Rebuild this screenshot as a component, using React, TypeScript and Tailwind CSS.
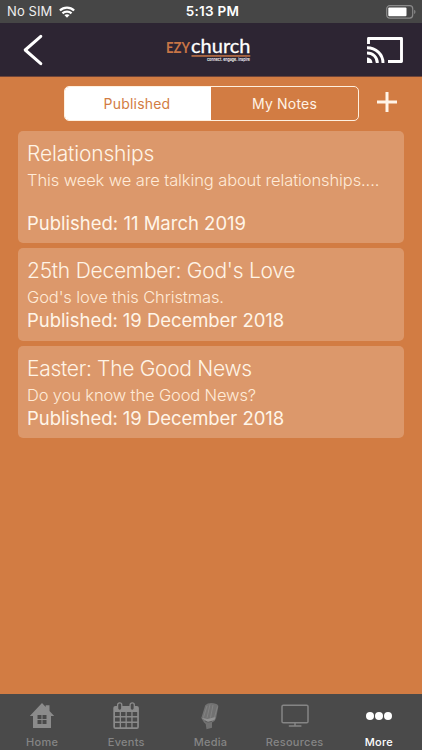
import React from "react";

type Note = {
  title: string;
  titleClass: string;
  text: string;
  textClass: string;
  date: string;
  dateClass: string;
};

const notes: Note[] = [
  {
    title: "Relationships",
    titleClass: "tracking-[-0.15px]",
    text: "This week we are talking about relationships....",
    textClass: "h-10 tracking-[-0.11px]",
    date: "Published: 11 March 2019",
    dateClass: "tracking-[0px]",
  },
  {
    title: "25th December: God's Love",
    titleClass: "tracking-[-0.25px]",
    text: "God's love this Christmas.",
    textClass: "h-5 tracking-[-0.11px]",
    date: "Published: 19 December 2018",
    dateClass: "tracking-[-0.05px]",
  },
  {
    title: "Easter: The Good News",
    titleClass: "tracking-[-0.3px]",
    text: "Do you know the Good News?",
    textClass: "h-5 tracking-[-0.14px]",
    date: "Published: 19 December 2018",
    dateClass: "tracking-[-0.05px]",
  },
];

function StatusBar() {
  return (
    <div className="grid h-[23px] shrink-0 grid-cols-3 items-center bg-[#464646] text-[13px] leading-[23px] text-white">
      <div className="flex items-center gap-[7px] pl-[7px]">
        <span className="tracking-[0.1px] text-[#eeeeee]">No SIM</span>
        <svg width="16" height="12" viewBox="0 0 16 12" fill="none" stroke="#fff" strokeWidth="2.3">
          <path d="M.9 4.5C4.9.7 11.1.7 15.1 4.5" />
          <path d="M3.5 7.4c2.4-2.4 6.6-2.4 9 0" />
          <path d="M8 11.7 5.4 9.1c1.4-1.3 3.8-1.3 5.2 0Z" fill="#fff" stroke="none" />
        </svg>
      </div>
      <div className="pl-[3px] text-center text-[13.5px] font-semibold tracking-[0.25px]">5:13 PM</div>
      <div className="flex justify-end pr-[5px]">
        <svg width="31" height="14" viewBox="0 0 31 14">
          <rect x="0.7" y="0.7" width="26" height="12.4" rx="3" fill="none" stroke="#8b8b8b" strokeWidth="1.2" />
          <rect x="2.3" y="2.6" width="18.2" height="8.7" rx="1" fill="#fff" />
          <path d="M28.2 4.8c1.7.6 1.7 3.6 0 4.2Z" fill="#8b8b8b" />
        </svg>
      </div>
    </div>
  );
}

function Header() {
  return (
    <header className="flex h-[54px] shrink-0 items-center justify-between border-b border-[#6e4439] bg-[#2d2533] pr-[19px] pl-[22px]">
      <svg width="22" height="32" viewBox="0 0 22 32" fill="none" stroke="#fff" strokeWidth="3" strokeLinecap="round" strokeLinejoin="round">
        <path d="M18.8 2.3 3.2 16l15.6 13.7" />
      </svg>
      <svg width="96" height="38" viewBox="-4 -4 96 38" className="ml-[5px] overflow-visible">
        <text x="2" y="17.5" fontFamily="Lato, sans-serif" fontWeight="700" fontSize="14.5" fill="#c87546" textLength="24" lengthAdjust="spacingAndGlyphs">EZY</text>
        <text x="27" y="17.5" fontFamily="Lato, sans-serif" fontWeight="400" fontSize="20" fill="#fff" stroke="#fff" strokeWidth="0.3" textLength="59.5" lengthAdjust="spacingAndGlyphs">church</text>
        <rect x="27.5" y="20.2" width="58.8" height="1.5" fill="#c87546" />
        <text x="43" y="26.2" fontFamily="Inter, sans-serif" fontWeight="600" fontSize="4.4" fill="#fff" textLength="43" lengthAdjust="spacingAndGlyphs">connect. engage. inspire</text>
      </svg>
      <svg width="36" height="26" viewBox="0 0 36 26" fill="none" stroke="#fff" strokeWidth="2.9">
        <path d="M1.5 7V1.5h33v23H21" strokeLinejoin="round" />
        <path d="M0 10.8c8.9 0 16 6.4 16 15.2" />
        <path d="M0 16c5.8 0 10.3 4.2 10.3 10" />
        <path d="M0 20.6c2.8 0 5.4 2.4 5.4 5.4H0Z" fill="#fff" stroke="none" />
      </svg>
    </header>
  );
}

function NoteCard({ note }: { note: Note }) {
  return (
    <article className="flex flex-col rounded-[5px] bg-[#dc986b] px-[9px] pt-[10px] pb-[7.5px] whitespace-nowrap text-[#fff4e6]">
      <h2 className={`mb-[3px] h-[26px] text-[21px] leading-[26px] font-light ${note.titleClass}`}>{note.title}</h2>
      <p className={`text-[16.5px] leading-5 font-light text-[#ffebd8] ${note.textClass}`}>{note.text}</p>
      <p className={`h-[26px] text-[18.5px] leading-[26px] text-[#fff5e8] ${note.dateClass}`}>{note.date}</p>
    </article>
  );
}

function HomeIcon() {
  return (
    <svg width="26" height="28" viewBox="0 0 26 28">
      <path d="M13 1 .8 14H4v12h18V14h3.2L20.5 9V3.2h-3.8V5Z" fill="#8b8b8b" />
      <path d="M8.5 13h4v4h-4Zm5 0h4v4h-4Zm-5 5h4v4h-4Zm5 0h4v4h-4Z" fill="#4a4a4a" />
    </svg>
  );
}

function CalendarIcon() {
  return (
    <svg width="28" height="28" viewBox="0 0 28 28">
      <rect x="1.3" y="4" width="25.6" height="23" rx="2" fill="#8b8b8b" />
      <rect x="5.6" y="0.9" width="4.2" height="7.4" rx="2" fill="#4a4a4a" stroke="#8b8b8b" strokeWidth="1.3" />
      <rect x="18.1" y="0.9" width="4.2" height="7.4" rx="2" fill="#4a4a4a" stroke="#8b8b8b" strokeWidth="1.3" />
      <path d="M3 10h4.7v4H3Zm6 0h4.5v4H9Zm5.8 0h4.5v4h-4.5Zm5.8 0h4.6v4h-4.6ZM3 15.5h4.7v4H3Zm6 0h4.5v4H9Zm5.8 0h4.5v4h-4.5Zm5.8 0h4.6v4h-4.6ZM3 21h4.7v4.3H3Zm6 0h4.5v4.3H9Zm5.8 0h4.5v4.3h-4.5Zm5.8 0h4.6v4.3h-4.6Z" fill="#4a4a4a" />
    </svg>
  );
}

function MicIcon() {
  return (
    <svg width="20" height="28" viewBox="0 0 20 28">
      <path d="M5.2 3.2Q9-.6 16.5 2q2 .8 1.8 2.4l-2.3 12q-1 3-4 4v5.4l-5.5 1.4-.8-5.3L4 20.5 1.3 16Z" fill="#727272" />
      <path d="M7 4 3.5 15.5M10 2.5 7 15.8M13 3l-2.5 12.7M17.5 4.5 14.6 15" fill="none" stroke="#878787" strokeWidth="0.8" />
      <path d="m1.5 15.7 6 1.2 7.8-2-.5 2.6-6.8 3Z" fill="#939393" />
      <path d="m5 19 3 1.3 4-1" fill="none" stroke="#5d5d5d" strokeWidth="1" />
    </svg>
  );
}

function MonitorIcon() {
  return (
    <svg width="28" height="24" viewBox="0 0 28 24" fill="none" stroke="#858585" strokeWidth="1.5">
      <rect x="1" y="1.2" width="26" height="17.6" rx="1.3" />
      <path d="M14 19v3M7.8 22h12.6" />
    </svg>
  );
}

function MoreIcon() {
  return (
    <svg width="26" height="10" viewBox="0 0 26 10" fill="#fff">
      <circle cx="4" cy="5" r="4" />
      <circle cx="13" cy="5" r="4" />
      <circle cx="22" cy="5" r="4" />
    </svg>
  );
}

const tabs = [
  { label: "Home", icon: <HomeIcon />, active: false },
  { label: "Events", icon: <CalendarIcon />, active: false },
  { label: "Media", icon: <MicIcon />, active: false },
  { label: "Resources", icon: <MonitorIcon />, active: false },
  { label: "More", icon: <MoreIcon />, active: true },
];

export default function App() {
  return (
    <div className="flex h-[750px] w-[422px] flex-col overflow-hidden bg-[#d27c43] font-['Inter',sans-serif]">
      <StatusBar />
      <Header />
      <main className="flex flex-1 flex-col">
        <div className="mt-[9px] flex h-[35px] items-center pl-16">
          <div className="flex h-[35px] w-[295px] overflow-hidden rounded-[5px] border border-[#fff0df] text-[14px] tracking-[0.2px]">
            <button className="w-[146px] bg-white pr-[2px] text-[#d27c43]">Published</button>
            <button className="flex-1 text-[#fff3e6]">My Notes</button>
          </div>
          <svg width="22" height="22" viewBox="0 0 22 22" className="mb-1 ml-[17px]" stroke="#fff4e8" strokeWidth="3">
            <path d="M11 1v20M1 11h20" />
          </svg>
        </div>
        <div className="mx-[18px] mt-[9.5px] flex flex-col gap-[5px]">
          {notes.map((note) => (
            <NoteCard key={note.title} note={note} />
          ))}
        </div>
      </main>
      <nav className="grid h-14 shrink-0 grid-cols-5 bg-[#4a4a4a] pr-px">
        {tabs.map((tab) => (
          <div key={tab.label} className={`flex flex-col items-center text-[11px] font-medium tracking-[0.25px] ${tab.active ? "text-white" : "text-[#858585]"}`}>
            <div className="mt-2 flex h-7 items-center">{tab.icon}</div>
            <span className="mt-[5px] leading-[14px]">{tab.label}</span>
          </div>
        ))}
      </nav>
    </div>
  );
}
